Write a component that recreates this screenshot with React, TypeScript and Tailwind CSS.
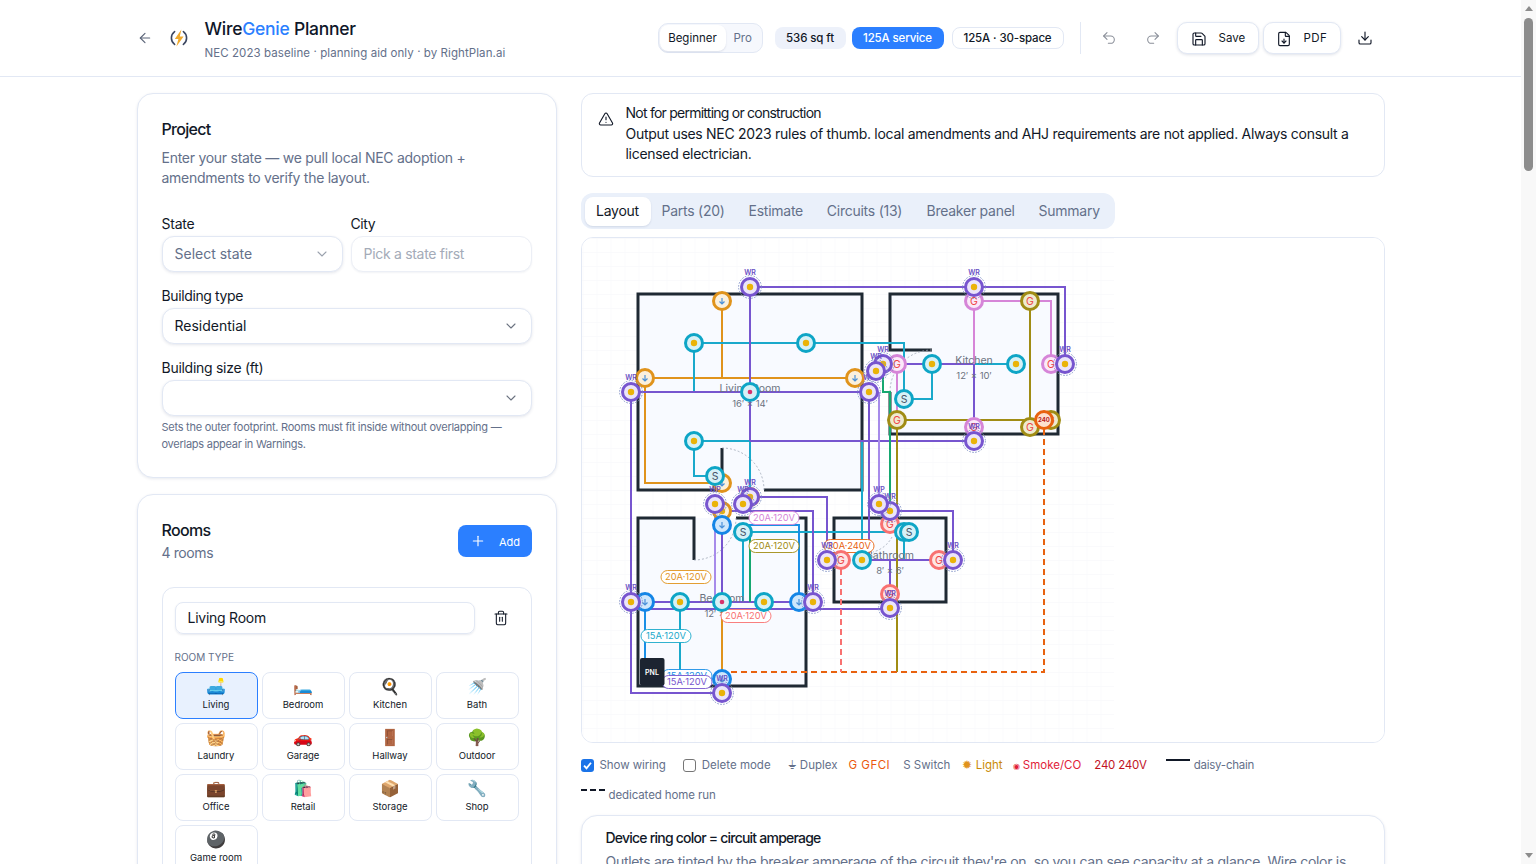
import { ArrowLeft, Undo2, Redo2, Save, FileDown, Download, TriangleAlert, ChevronDown, Plus, Trash2 } from "lucide-react";

const C: Record<string, [string, string]> = {
  teal: ["#0ea5c6", "#d6f1f7"],
  orange: ["#e0931c", "#fbf0dd"],
  purple: ["#7755cf", "#ebe4fa"],
  pink: ["#d685d8", "#fbe9f9"],
  olive: ["#a08c14", "#eeeacf"],
  red: ["#f87171", "#fde5e5"],
  blue: ["#1485e6", "#cfe7fc"],
  fire: ["#e8620f", "#fde0cf"],
};
const W = { p: "#7755cf", t: "#1aa9cb", o: "#e0931c", k: "#d685d8", l: "#a08c14", r: "#f87171", b: "#1a8fe6", g: "#16a870", v: "#a78bea" };

const wires: [string, string][] = [
  [W.o, "M722 301V378M645 378H855M645 378V483H722M722 602V679"],
  [W.t, "M694 343H904V399H932V364H1016M694 343V392M694 441H750M750 392V497M694 441V476H715"],
  [W.t, "M743 532H904V560M743 532V602M862 441V560M680 602V672H652"],
  [W.p, "M750 287H1065V364M750 287V392M631 392H869M750 441H974M974 287V301M897 364H974M974 364V441"],
  [W.p, "M750 392V441M631 392V693H722M869 392V560M750 497H827V560M715 511H813V602M631 609H890M645 602H799"],
  [W.p, "M890 511H953V560M862 560H939M890 560V594M722 525V602"],
  [W.v, "M879 392V504M715 504V602"],
  [W.k, "M974 301H1051V364M974 301V364M897 364V420"],
  [W.l, "M1030 301V427M897 420H1044M897 420V672"],
  [W.g, "M883 371V392H890V511M750 532V602"],
  [W.b, "M645 602V672M743 525H799V602"],
];

type D = [number, number, string, string];
const devices: D[] = [
  [722, 301, "orange", "d"], [645, 378, "orange", "d"], [855, 378, "orange", "d"], [722, 483, "orange", "d"],
  [694, 343, "teal", "l"], [806, 343, "teal", "l"], [694, 441, "teal", "l"], [750, 392, "teal", "s"],
  [715, 476, "teal", "S"],
  [974, 301, "pink", "G"], [1051, 364, "pink", "G"], [897, 364, "pink", "G"], [974, 427, "pink", "G"],
  [1030, 301, "olive", "G"], [897, 420, "olive", "G"], [1051, 420, "olive", "G"], [1030, 427, "olive", "G"],
  [932, 364, "teal", "l"], [1016, 364, "teal", "l"], [904, 399, "teal", "S"],
  [1044, 420, "fire", "240"],
  [890, 524, "red", "G"], [841, 560, "red", "G"], [939, 560, "red", "G"], [890, 594, "red", "G"],
  [862, 560, "teal", "l"], [904, 532, "teal", "S"], [909, 532, "teal", "S"],
  [750, 497, "orange", "l"], [722, 511, "orange", "l"],
  [722, 525, "blue", "d"], [645, 602, "blue", "d"], [799, 602, "blue", "d"], [722, 679, "blue", "d"],
  [680, 602, "teal", "l"], [764, 602, "teal", "l"], [722, 602, "teal", "s"], [743, 532, "teal", "S"],
];
const wrs: [number, number, string?][] = [
  [750, 287], [974, 287], [631, 392], [869, 392], [1065, 364], [974, 441], [883, 364], [876, 371],
  [750, 497], [743, 504], [715, 504, "WP"], [631, 602], [813, 602], [722, 693],
  [827, 560], [953, 560], [890, 608], [890, 511], [879, 504, "WP"],
];
const pills: [number, number, string, string][] = [
  [774, 518, "#d685d8", "20A·120V"], [774, 546, "#a08c14", "20A·120V"], [686, 577, "#e0931c", "20A·120V"],
  [666, 636, "#1aa9cb", "15A·120V"], [746, 616, "#f87171", "20A·120V"], [687, 676, "#1a8fe6", "15A·120V"],
  [687, 682, "#7755cf", "15A·120V"], [849, 546, "#e8620f", "30A·240V"],
];
const rooms: [string, string, string, number, number, string][] = [
  ["M722 490H638V294H862V490H764M722 490V448", "Living Room", "16′ × 14′", 750, 388, "M638 294h224v196h-224z"],
  ["M890 392V434H1058V294H890V350H932", "Kitchen", "12′ × 10′", 974, 360, "M890 294h168v140h-168z"],
  ["M736 518H806V686H638V518H694V560", "Bedroom", "12′ × 12′", 722, 598, "M638 518h168v168h-168z"],
  ["M834 518H946V602H834Z", "Bathroom", "8′ × 6′", 890, 555, "M834 518h112v84h-112z"],
];

function FloorPlan() {
  return (
    <svg viewBox="582 238 802 504" className="block h-[504px] w-[802px]" fontFamily="Inter, sans-serif">
      <defs>
        <pattern id="grid" width="14" height="14" patternUnits="userSpaceOnUse" x="582.5" y="238">
          <path d="M14 0H0V14" fill="none" stroke="#f5f6f9" strokeWidth="1" />
        </pattern>
      </defs>
      <rect x="582" y="238" width="802" height="504" fill="#fff" />
      <rect x="582" y="238" width="532" height="504" fill="url(#grid)" />
      {rooms.map((r) => (
        <g key={r[1]}>
          <path d={r[5]} fill="#f8faff" />
          <path d={r[0]} fill="none" stroke="#1f2933" strokeWidth="3" />
        </g>
      ))}
      <g fill="none" stroke="#9aa3b2" strokeWidth="0.8" strokeDasharray="2 2">
        <path d="M722 448A42 42 0 0 1 764 490" />
        <path d="M932 350A42 42 0 0 0 890 392" />
        <path d="M694 560A42 42 0 0 0 736 518" />
        <path d="M892 537A30 30 0 0 1 873 552" />
      </g>
      {wires.map((w, i) => (
        <path key={i} d={w[1]} fill="none" stroke={w[0]} strokeWidth="2" />
      ))}
      <path d="M1044 429V672H722" fill="none" stroke="#e8620f" strokeWidth="2" strokeDasharray="6 4" />
      <path d="M841 569V672" fill="none" stroke="#f87171" strokeWidth="2" strokeDasharray="6 4" />
      {rooms.map((r) => (
        <g key={r[1]} textAnchor="middle">
          <text x={r[3]} y={r[4] + 4} fontSize="10.5" fill="#6b7280">{r[1]}</text>
          <text x={r[3]} y={r[4] + 19} fontSize="9.5" fill="#6b7280">{r[2]}</text>
        </g>
      ))}
      {pills.map((p, i) => (
        <g key={i}>
          <rect x={p[0] - 25} y={p[1] - 6.5} width="50" height="13" rx="6.5" fill="#fff" stroke={p[2]} strokeWidth="0.9" />
          <text x={p[0]} y={p[1] + 3.2} fontSize="9.3" textAnchor="middle" fill={p[2]}>{p[3]}</text>
        </g>
      ))}
      <rect x="640" y="658" width="24.5" height="27.5" rx="2" fill="#1c2431" />
      <text x="652" y="675" fontSize="7" fontWeight="600" fill="#fff" textAnchor="middle">PNL</text>
      {devices.map((d, i) => {
        const [s, f] = C[d[2]];
        return (
          <g key={i}>
            <circle cx={d[0]} cy={d[1]} r="8.5" fill={f} stroke={s} strokeWidth="3" />
            {d[3] === "l" && <circle cx={d[0]} cy={d[1]} r="3.2" fill="#eab308" />}
            {d[3] === "s" && <circle cx={d[0]} cy={d[1]} r="2.3" fill="#d6336c" />}
            {d[3] === "d" && (
              <path d={`M${d[0]} ${d[1] - 3}V${d[1] + 2}M${d[0] - 2.5} ${d[1] + 0.5}L${d[0]} ${d[1] + 3}L${d[0] + 2.5} ${d[1] + 0.5}`} fill="none" stroke="#4a90d9" strokeWidth="1.2" />
            )}
            {d[3] === "G" && <text x={d[0]} y={d[1] + 3.8} fontSize="10.5" textAnchor="middle" fill="#ef4444">G</text>}
            {d[3] === "S" && <text x={d[0]} y={d[1] + 3.8} fontSize="10.5" textAnchor="middle" fill="#475569">S</text>}
            {d[3] === "240" && <text x={d[0]} y={d[1] + 2.4} fontSize="6" fontWeight="700" textAnchor="middle" fill="#b91c1c">240</text>}
          </g>
        );
      })}
      {wrs.map((d, i) => (
        <g key={i}>
          <circle cx={d[0]} cy={d[1]} r="11.4" fill="none" stroke="#7d8fc4" strokeWidth="0.9" strokeDasharray="1.6 1.4" />
          <circle cx={d[0]} cy={d[1]} r="8.5" fill="#ebe4fa" stroke="#7755cf" strokeWidth="3" />
          <circle cx={d[0]} cy={d[1]} r="3.2" fill="#eab308" />
          <text x={d[0]} y={d[1] - 12.5} fontSize="7" fontWeight="600" textAnchor="middle" fill="#6a50c4">{d[2] ?? "WR"}</text>
        </g>
      ))}
    </svg>
  );
}

function Logo() {
  return (
    <svg width="18" height="18" viewBox="0 0 18 18" fill="none">
      <path d="M4.6 2.6A8 8 0 0 0 4.6 15.4" stroke="#3b4660" strokeWidth="1.6" strokeLinecap="round" />
      <path d="M13.4 2.6A8 8 0 0 1 13.4 15.4" stroke="#3b4660" strokeWidth="1.6" strokeLinecap="round" />
      <path d="M11.4 0.4L4.8 10H8.4L6.4 17.6L13.6 7.4H9.8Z" fill="#f0a92b" />
    </svg>
  );
}

const roomTypes = [
  ["🛋️", "Living"], ["🛏️", "Bedroom"], ["🍳", "Kitchen"], ["🚿", "Bath"],
  ["🧺", "Laundry"], ["🚗", "Garage"], ["🚪", "Hallway"], ["🌳", "Outdoor"],
  ["💼", "Office"], ["🛍️", "Retail"], ["📦", "Storage"], ["🔧", "Shop"],
  ["🎱", "Game room"],
];

function Select({ value, muted }: { value: string; muted?: boolean }) {
  return (
    <div className={`flex h-9 w-full items-center justify-between rounded-xl border border-[#e2e8f4] bg-white pl-3 pr-3 text-sm shadow-[0_1px_3px_rgba(30,50,100,0.12)] ${muted ? "text-[#64708a]" : "text-[#111827]"}`}>
      <span>{value}</span>
      <ChevronDown className={`size-4 ${muted ? "text-[#9aa1ad]" : "text-[#6b7280]"}`} strokeWidth={1.6} />
    </div>
  );
}

export default function App() {
  return (
    <div className="flex h-screen overflow-hidden bg-white font-['Inter',sans-serif] text-[#111827]">
      <div className="w-[1521px] shrink-0">
        <header className="h-[77px] border-b border-[#e2e8f4]">
          <div className="mx-auto flex h-[76px] max-w-[1280px] items-center px-4">
            <ArrowLeft className="size-4 text-[#5b6478]" strokeWidth={1.7} />
            <div className="ml-[17px]"><Logo /></div>
            <div className="ml-[17px] pt-[3px]">
              <div className="text-[17.5px] font-medium leading-[22px] tracking-[-0.25px] text-[#0f172a]">Wire<span className="text-[#2b7fff]">Genie</span> Planner</div>
              <div className="mt-[3px] text-[11.5px] leading-4 tracking-[0.08px] text-[#64708a]">NEC 2023 baseline <span className="align-[2px]">·</span> planning aid only <span className="align-[2px]">·</span> by RightPlan.ai</div>
            </div>
            <div className="ml-auto flex items-center">
              <div className="flex h-[30px] w-[105px] items-center rounded-[10px] border border-[#e2e8f4] bg-[#f6f8fd] p-[1px] text-[11.5px]">
                <span className="flex h-[26px] w-[66px] items-center justify-center rounded-lg bg-white pt-px shadow-[0_1px_2px_rgba(30,50,100,0.12)]">Beginner</span>
                <span className="ml-[8px] pt-px text-[#64708a]">Pro</span>
              </div>
              <span className="ml-3 flex h-[22px] w-[71px] items-center justify-center rounded-lg bg-[#edf1fa] pt-px text-[11.5px] font-medium tracking-[-0.1px]">536 sq ft</span>
              <span className="ml-[6px] flex h-[22px] w-[92px] items-center justify-center rounded-lg bg-[#2b7fff] pt-px text-[11.5px] font-medium tracking-[-0.15px] text-white">125A service</span>
              <span className="ml-2 flex h-[22px] w-[112px] items-center justify-center rounded-lg border border-[#e2e8f4] pt-px text-[11.5px] font-medium tracking-[-0.15px]">125A <span className="mx-[3px] align-[2px]">·</span> 30-space</span>
              <span className="ml-4 h-8 w-px bg-[#e2e8f4]" />
              <Undo2 className="ml-[20px] size-4 text-[#8a8f99]" strokeWidth={1.6} />
              <Redo2 className="ml-7 size-4 text-[#8a8f99]" strokeWidth={1.6} />
              <button className="ml-4 flex h-8 w-[82px] items-center rounded-[10px] border border-[#e2e8f4] bg-white pl-[13px] pt-px text-[11.5px] shadow-[0_1px_3px_rgba(30,50,100,0.14)]">
                <Save className="size-4" strokeWidth={1.7} /><span className="ml-[12px]">Save</span>
              </button>
              <button className="ml-1 flex h-8 w-[78px] items-center rounded-[10px] border border-[#e2e8f4] bg-white pl-[12px] pt-px text-[11.5px] tracking-[0.4px] shadow-[0_1px_3px_rgba(30,50,100,0.14)]">
                <FileDown className="size-4" strokeWidth={1.7} /><span className="ml-[12px]">PDF</span>
              </button>
              <Download className="ml-4 mr-3 size-4" strokeWidth={1.7} />
            </div>
          </div>
        </header>

        <main className="mx-auto grid max-w-[1280px] grid-cols-[420px_804px] gap-6 px-4 pt-4">
          <div className="flex flex-col gap-4">
            <section className="h-[385px] rounded-2xl border border-[#e2e8f4] bg-white px-6 pt-[25px] shadow-[0_1px_3px_rgba(30,50,100,0.1)]">
              <h2 className="text-base font-medium leading-5 tracking-[-0.7px]">Project</h2>
              <p className="mt-[9px] text-sm leading-5 tracking-[-0.27px] text-[#64708a]">Enter your state — we pull local NEC adoption +<br />amendments to verify the layout.</p>
              <div className="mt-[26px] grid grid-cols-[181px_181px] gap-2">
                <div>
                  <label className="block text-sm leading-5 tracking-[-0.25px]">State</label>
                  <div className="mt-[2px]"><Select value="Select state" muted /></div>
                </div>
                <div>
                  <label className="block text-sm leading-5 tracking-[-0.4px]">City</label>
                  <div className="mt-[2px] flex h-9 items-center rounded-xl border border-[#eceff6] bg-white px-3 text-sm tracking-[-0.3px] text-[#a4abb8] shadow-[0_1px_2px_rgba(30,50,100,0.06)]">Pick a state first</div>
                </div>
              </div>
              <label className="mt-[14px] block text-sm leading-5 tracking-[-0.38px]">Building type</label>
              <div className="mt-[2px]"><Select value="Residential" /></div>
              <label className="mt-[14px] block text-sm leading-5 tracking-[-0.28px]">Building size (ft)</label>
              <div className="mt-[2px]"><Select value="" /></div>
              <p className="mt-[3px] text-[11px] leading-[17px] tracking-[-0.26px] text-[#64708a]">Sets the outer footprint. Rooms must fit inside without overlapping —<br />overlaps appear in Warnings.</p>
            </section>

            <section className="rounded-2xl border border-[#e2e8f4] bg-white px-6 pb-6 pt-[25px] shadow-[0_1px_3px_rgba(30,50,100,0.1)]">
              <div className="flex items-start justify-between">
                <div>
                  <h2 className="text-base font-medium leading-5 tracking-[-0.7px]">Rooms</h2>
                  <p className="mt-[3px] text-sm leading-5 tracking-[-0.4px] text-[#64708a]">4 rooms</p>
                </div>
                <button className="mt-[5px] flex h-8 w-[74px] items-center justify-center gap-[13px] rounded-lg bg-[#2b7fff] pl-[1px] text-[11px] text-white">
                  <Plus className="size-4" strokeWidth={1.7} /><span className="pt-[2px]">Add</span>
                </button>
              </div>
              <div className="mt-[24px] rounded-xl border border-[#e2e8f4] p-3 pt-[14px]">
                <div className="flex items-center">
                  <div className="flex h-8 w-[300px] items-center rounded-lg border border-[#e2e8f4] px-3 text-sm tracking-[-0.25px] shadow-[0_1px_2px_rgba(30,50,100,0.1)]">Living Room</div>
                  <Trash2 className="ml-[18px] size-4" strokeWidth={1.6} />
                </div>
                <div className="mt-[17px] text-[10px] leading-[12px] text-[#64708a]">ROOM TYPE</div>
                <div className="mt-[9px] grid grid-cols-[83px_83px_83px_83px] gap-1">
                  {roomTypes.map(([e, n], i) => (
                    <button key={n} className={`flex h-[47px] flex-col items-center justify-center rounded-lg border pb-[2px] ${i === 0 ? "border-[#2b7fff] bg-[#e8f1fe]" : "border-[#e2e8f4] bg-white"}`}>
                      <span className="font-['Noto_Color_Emoji'] text-base leading-[20px]">{e}</span>
                      <span className="mt-[1px] text-[9.5px] leading-[14px]">{n}</span>
                    </button>
                  ))}
                </div>
              </div>
            </section>
          </div>

          <div className="min-w-0">
            <div className="flex h-[84px] items-start rounded-xl border border-[#e2e8f4] bg-white pl-4 pr-6 pt-[9px] text-sm leading-[20.5px]">
              <TriangleAlert className="mr-3 mt-[8px] size-4 shrink-0" strokeWidth={1.7} />
              <div>
                <div className="tracking-[-0.76px]">Not for permitting or construction</div>
                <div className="tracking-[-0.29px]">Output uses NEC 2023 rules of thumb. local amendments and AHJ requirements are not applied. Always consult a licensed electrician.</div>
              </div>
            </div>
            <div className="mt-4 flex h-9 w-[534px] items-center whitespace-nowrap rounded-xl bg-[#eaf0fa] pl-[4px] text-sm tracking-[-0.25px] text-[#64708a]">
              <span className="flex h-[29px] w-[66px] items-center justify-center rounded-lg bg-white text-[#111827] shadow-[0_1px_2px_rgba(30,50,100,0.12)]">Layout</span>
              <span className="ml-[11px] w-[63px] text-center">Parts (20)</span>
              <span className="ml-[24px] w-[54px] text-center">Estimate</span>
              <span className="ml-[24px] w-[76px] text-center">Circuits (13)</span>
              <span className="ml-[24px] w-[88px] text-center">Breaker panel</span>
              <span className="ml-[24px] w-[60px] text-center">Summary</span>
            </div>
            <div className="mt-2 h-[506px] overflow-hidden rounded-xl border border-[#e2e8f4]">
              <FloorPlan />
            </div>
            <div className="mt-[11px] flex flex-wrap items-center text-[11.5px] leading-[22px] text-[#64708a]">
              <span className="flex h-[22px] items-center">
                <span className="flex size-[13px] items-center justify-center rounded-[3px] bg-[#1a73e8]"><svg width="11" height="11" viewBox="0 0 12 12" fill="none"><path d="M2.2 6.2L4.9 9L9.8 3" stroke="#fff" strokeWidth="2" /></svg></span>
                <span className="ml-[6px] tracking-[-0.05px]">Show wiring</span>
              </span>
              <span className="ml-[17px] flex h-[22px] items-center">
                <span className="size-[13px] rounded-[3px] border border-[#767676] bg-white" />
                <span className="ml-[6px]">Delete mode</span>
              </span>
              <span className="ml-[17px]">⏚ Duplex</span>
              <span className="ml-[11px] tracking-[0.5px] text-[#ea580c]">G GFCI</span>
              <span className="ml-[13px]">S Switch</span>
              <span className="ml-[12px] text-[#ca8a04]"><span className="text-[#e0931c]">✹</span> Light</span>
              <span className="ml-[10px] text-[#e11d38]"><span className="text-[8px] leading-none">◉</span> Smoke/CO</span>
              <span className="ml-[13px] tracking-[-0.2px] text-[#c1121f]">240 240V</span>
              <span className="ml-[19px] flex h-[22px] items-start"><span className="mt-[5px] h-[2px] w-6 bg-[#111827]" /><span className="ml-1 tracking-[-0.25px]">daisy-chain</span></span>
              <span className="mt-2 flex h-[22px] w-full items-start"><span className="mt-[5px] w-6 border-t-2 border-dashed border-[#111827]" /><span className="ml-1 tracking-[-0.1px]">dedicated home run</span></span>
            </div>
            <div className="mt-[9px] rounded-2xl border border-[#e2e8f4] bg-white px-6 pb-6 pt-[12px] shadow-[0_1px_3px_rgba(30,50,100,0.1)]">
              <h3 className="text-sm font-medium leading-5 tracking-[-0.78px]">Device ring color = circuit amperage</h3>
              <p className="mt-[4px] text-sm leading-5 tracking-[-0.3px] text-[#64708a]">Outlets are tinted by the breaker amperage of the circuit they're on, so you can see capacity at a glance. Wire color is</p>
            </div>
          </div>
        </main>
      </div>
      <div className="flex w-[15px] shrink-0 flex-col items-center bg-[#f8f8f8]">
        <span className="mt-[6px] h-0 w-0 border-x-[4.5px] border-b-[5px] border-x-transparent border-b-[#8c8c8c]" />
        <span className="mt-[7px] h-[153px] w-[9px] rounded-full bg-[#8c8c8c]" />
        <span className="mb-[6px] mt-auto h-0 w-0 border-x-[4.5px] border-t-[5px] border-x-transparent border-t-[#8c8c8c]" />
      </div>
    </div>
  );
}
